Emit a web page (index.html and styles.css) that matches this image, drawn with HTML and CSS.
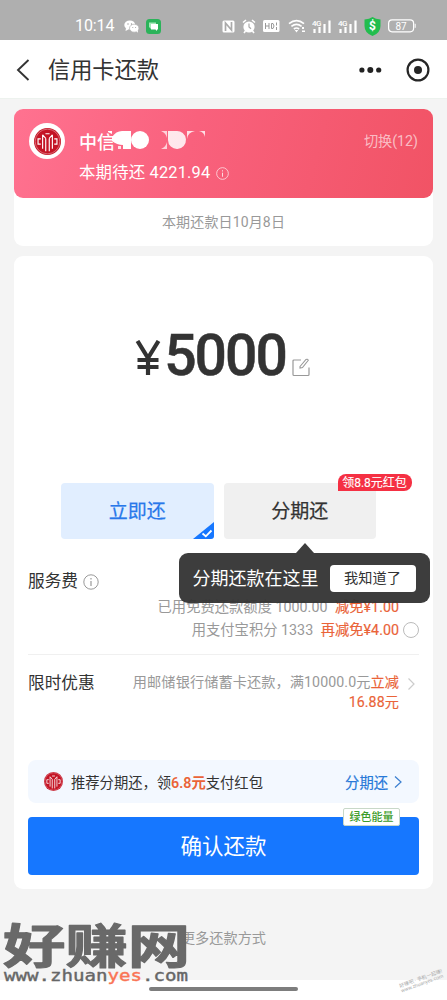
FILE: index.html
```html
<!DOCTYPE html>
<html lang="zh-CN">
<head>
<meta charset="utf-8">
<meta name="viewport" content="width=device-width, initial-scale=1">
<title>信用卡还款</title>
<link rel="stylesheet" href="styles.css">
</head>
<body>
<svg class="defs" aria-hidden="true">
  <symbol id="bank" viewBox="0 0 26 26">
    <circle cx="13" cy="13" r="13" fill="#c41425"/>
    <circle cx="13" cy="13" r="11.900" fill="none" stroke="#fff" stroke-width=".5" opacity=".7"/>
    <g fill="none" stroke="#fff" stroke-width="1.100">
      <path d="M6.500 10.500H3.900v5h2.600M19.500 10.500h2.600v5h-2.600M8.300 6.500V20M17.700 6.500V20M11.300 10v12.500M14.700 10v12.500M8.300 6.500l3 3.500M17.700 6.500l-3 3.500M11 5.500h4"/>
    </g>
  </symbol>
  <symbol id="info" viewBox="0 0 16 16">
    <circle cx="8" cy="8" r="7.200" fill="none" stroke="currentColor"/>
    <path d="M8 7v5M8 4v1.500" stroke="currentColor" stroke-width="1.200"/>
  </symbol>
</svg>
<div class="screen">
  <div class="status">
    <span class="time">10:14</span>
    <svg class="wechat" width="15" height="13" viewBox="0 0 15 13"><ellipse cx="5.800" cy="5" rx="5.500" ry="4.600" fill="#fff"/><path d="M2 8l-.5 3 3-1.500z" fill="#fff"/><ellipse cx="10.200" cy="8.200" rx="4.700" ry="4" fill="#fff" stroke="#afafaf" stroke-width=".7"/><path d="M12 11l2 1.800-.3-3z" fill="#fff"/><g fill="#999"><circle cx="4" cy="4" r=".7"/><circle cx="7.500" cy="4" r=".7"/><circle cx="8.800" cy="7.500" r=".5"/><circle cx="11.600" cy="7.500" r=".5"/></g></svg>
    <svg class="chat" width="15" height="15" viewBox="0 0 15 15"><rect width="15" height="15" rx="3.500" fill="#2bb35a"/><path d="M3 3.500h7v5H5.500L4 10V8.500H3z" fill="#a5e8b8"/><path d="M5 5h7v5.500h-1V12l-1.500-1.500H5z" fill="#fff"/></svg>
    <div class="status-icons">
      <svg width="13" height="13" viewBox="0 0 13 13"><rect x=".5" y=".5" width="12" height="12" rx="1.500" fill="#fff"/><path d="M3.500 11V3l6 7V2" fill="none" stroke="#aaa" stroke-width="1.700"/></svg>
      <svg class="alarm" width="14" height="15" viewBox="0 0 14 15"><circle cx="7" cy="8" r="5.600" fill="#fff"/><path d="M1 3.500L4 1M13 3.500L10 1M3.500 12L2 14M10.500 12l1.500 2" stroke="#fff" stroke-width="1.600"/><path d="M7 4.500V8l2 1.800" fill="none" stroke="#aaa" stroke-width="1.200"/></svg>
      <svg class="hd" width="17" height="12" viewBox="0 0 17 12"><rect width="16.500" height="12" rx="1.500" fill="#fff"/><path d="M2.500 3v6M2.500 6h3.500M6 3v6M8.500 3.500v5h1.500q2-2.500 0-5zM13.500 2.500v3M13.500 7v3" fill="none" stroke="#999"/></svg>
      <svg class="wifi" width="18" height="14" viewBox="0 0 18 14"><g fill="none" stroke="#fff" stroke-width="1.700"><path d="M1 4.600Q8.500-1.500 16 4.600M3.400 7.400q5.100-4 10.200 0M5.900 10q2.600-2 5.200 0"/></g><path d="M6.700 11h3.600l-1.800 2.500zM14 8h2v2h-2zM14 11.500h3v1.500h-3z" fill="#fff"/></svg>
      <svg class="signal" width="20" height="15" viewBox="0 0 20 15"><text x="0" y="7" class="fourg">4G</text><path d="M2.500 10v4M7.500 8v6M12.500 5v9M17.500 1.500v12.500" stroke="#fff" stroke-width="2.200"/></svg>
      <svg class="signal" width="20" height="15" viewBox="0 0 20 15"><text x="0" y="7" class="fourg">4G</text><path d="M2.500 10v4M7.500 8v6M12.500 5v9M17.500 1.500v12.500" stroke="#fff" stroke-width="2.200"/></svg>
      <svg class="shield" width="17" height="19" viewBox="0 0 17 19"><path d="M8.500 0q3 2.300 8 2.600V9q0 7-8 10-8-3-8-10V2.600Q5.500 2.300 8.500 0z" fill="#22bd4e"/><text x="8.500" y="13" text-anchor="middle" class="dollar">$</text></svg>
      <svg class="battery" width="28" height="14" viewBox="0 0 28 14"><rect x=".6" y=".8" width="25" height="12" rx="3.500" fill="none" stroke="#fff" stroke-width="1.200"/><path d="M27.200 4.800v4" stroke="#fff"/><text x="13" y="10.700" text-anchor="middle" class="level">87</text></svg>
    </div>
  </div>
  <header class="nav">
    <svg width="14" height="22" viewBox="0 0 14 22"><path d="M12.500 1L2 11l10.500 10" fill="none" stroke="#333" stroke-width="1.900"/></svg>
    <h1>信用卡还款</h1>
    <svg class="more" width="23" height="8" viewBox="0 0 23 8"><g fill="#222"><circle cx="2.900" cy="4" r="2.600"/><circle cx="11.300" cy="4" r="3"/><circle cx="19.700" cy="4" r="2.600"/></g></svg>
    <svg width="24" height="24" viewBox="0 0 24 24"><circle cx="12" cy="12" r="10.400" fill="none" stroke="#262626" stroke-width="2.200"/><circle cx="12" cy="12" r="4" fill="#262626"/></svg>
  </header>
  <main>
    <section class="card bill">
      <div class="bank-card">
        <div class="logo"><svg width="27" height="27"><use href="#bank"/></svg></div>
        <div class="bank-info">
          <div class="bank-name">中信<svg width="98" height="20" viewBox="0 0 98 20"><g fill="#fff"><path d="M0 1h4v3L0 2zM4 7Q8 1 14 1h9v18h-8v-4q-6 0-11-4z"/><circle cx="32" cy="10" r="9"/><path d="M10 16h3v3h-3z" opacity=".8"/><path d="M53 1h6v7q-1-5-6-7zM53 19q5-2 6-7v7z" opacity=".7"/><path d="M60 1h8a9 9 0 1 1-8 9z" opacity=".85"/><path d="M79 1h8q-7 1-8 8zM91 1h6v6q-1-5-6-6z" opacity=".8"/></g></svg></div>
          <div class="due">本期待还 4221.94 <svg width="13" height="13"><use href="#info"/></svg></div>
        </div>
        <span class="switch">切换(12)</span>
      </div>
      <div class="due-date">本期还款日10月8日</div>
    </section>
    <section class="card pay">
      <div class="amount">
        <svg class="yen" width="26" height="36" viewBox="0 0 26 36"><path d="M2.500 1L13 18 23.500 1M13 17v18M2.500 20h21M2.500 27h21" fill="none" stroke="#333" stroke-width="4.200"/></svg>
        <span class="number">5000</span>
        <svg class="edit" width="18" height="19" viewBox="0 0 18 19"><path d="M9 2H2Q1 2 1 3v13.500q0 1 1 1h14q1 0 1-1V9.500" fill="none" stroke="#999" stroke-width="1.200"/><path d="M8 8.500L14 1.500q1.500-.8 2.300.8L10.500 9.500 8 10z" fill="none" stroke="#999" stroke-width="1.100"/></svg>
      </div>
      <div class="modes">
        <div class="mode on">立即还<svg class="tick" width="21" height="17" viewBox="0 0 21 17"><path d="M21 0v14q0 3-3 3H0z" fill="#1677ff"/><path d="M9.500 11.500l3.300 2.800 5.700-5.800" fill="none" stroke="#fff" stroke-width="1.800"/></svg></div>
        <div class="mode">分期还<span class="coupon">领8.8元红包</span>
          <div class="tip"><span>分期还款在这里</span><b>我知道了</b></div>
        </div>
      </div>
      <div class="fee">
        <div class="label">服务费 <svg width="16" height="16"><use href="#info"/></svg></div>
        <div class="fee-list">
          <p>已用免费还款额度 1000.00 <em>减免¥1.00</em></p>
          <p>用支付宝积分 1333 <em>再减免¥4.00</em><i class="radio"></i></p>
        </div>
      </div>
      <div class="offer">
        <div class="label">限时优惠</div>
        <p>用邮储银行储蓄卡还款，满10000.0元<em>立减<br>16.88元</em></p>
        <svg width="9" height="14" viewBox="0 0 9 14"><path d="M1.500 1.500L7 7l-5.500 5.500" fill="none" stroke="#ccc" stroke-width="1.200"/></svg>
      </div>
      <div class="promo">
        <svg width="19" height="19"><use href="#bank"/></svg>
        <span>推荐分期还，领<em>6.8元</em>支付红包</span>
        <a>分期还<svg width="8" height="14" viewBox="0 0 8 14"><path d="M1 1.500L7 7l-6 5.500" fill="none" stroke="#3b7fd0" stroke-width="1.200"/></svg></a>
      </div>
      <div class="confirm">确认还款<span class="energy">绿色能量</span></div>
    </section>
    <div class="other">更多还款方式</div>
  </main>
  <footer><i class="home"></i></footer>
  <div class="brand">
    <svg width="192" height="66" viewBox="0 0 192 66">
      <text transform="translate(2 41.500) scale(1.200 .9)" x="0" y="0" class="brand-name">好赚网</text>
      <text x="3" y="60" class="brand-url" textLength="184" lengthAdjust="spacingAndGlyphs">www.zhuan<tspan class="hot">yes</tspan>.com</text>
    </svg>
  </div>
  <div class="stamp">好赚吧 · 手机一起赚!<br>www.zhuanyes.com</div>
</div>
</body>
</html>
```
FILE: styles.css
```css
* { box-sizing: border-box; }
body { margin: 0; font-family: Roboto, "Noto Sans CJK SC", sans-serif; color: #333; background: #f4f4f4; }
svg { display: block; flex: none; }
.defs { position: absolute; width: 0; height: 0; }
em, i { font-style: normal; }
p, h1 { margin: 0; font-weight: 400; }
.screen { position: relative; height: 1000px; overflow: hidden; display: flex; flex-direction: column; }

.status { height: 40px; flex: none; background: #afafaf; display: flex; align-items: center; padding: 12px 31px 0 75px; color: #fff; }
.time { font-size: 16px; line-height: 20px; width: 49px; letter-spacing: -.1px; }
.chat { margin-left: 7px; }
.status-icons { display: flex; align-items: center; margin-left: auto; }
.alarm { margin-left: 7px; }
.hd { margin-left: 7px; }
.wifi { margin-left: 8px; }
.signal { margin-left: 6px; }
.shield { margin-left: 6px; }
.battery { margin-left: 7px; }
.fourg { font-size: 8px; font-weight: 500; fill: #fff; letter-spacing: -.5px; }
.dollar { font-size: 12px; font-weight: 700; fill: #fff; }
.level { font-size: 10px; fill: #fff; }

.nav { height: 59px; flex: none; background: #fff; border-bottom: 1px solid #edf2ee; display: flex; align-items: center; padding: 1px 17px 0 16px; }
.nav h1 { font-size: 22.200px; line-height: 30px; margin-left: 18px; padding-top: 1px; }
.more { margin-left: auto; margin-right: 24px; }

main { flex: 1; padding: 10px 14px 0; }
.card { background: #fff; border-radius: 9px; }
.bill { height: 137px; }
.bank-card { height: 89px; border-radius: 9px; background: linear-gradient(105deg, #ff7290 0%, #f9617d 42%, #f15365 100%); display: flex; padding: 14px 15px 0; color: #fff; }
.logo { width: 36px; height: 36px; border-radius: 50%; background: #fff; display: grid; place-items: center; }
.bank-info { margin-left: 14px; padding-top: 7px; }
.bank-name { font-size: 18px; line-height: 26px; font-weight: 500; display: flex; align-items: center; }
.bank-name svg { margin: -6px 0 0 -7px; overflow: visible; }
.due { font-size: 16.400px; line-height: 24px; margin-top: 5px; display: flex; align-items: center; letter-spacing: .18px; white-space: pre; }
.due svg { opacity: .8; margin-left: 1px; margin-top: 1px; }
.switch { margin-left: auto; padding-top: 8px; font-size: 14.200px; line-height: 20px; color: rgba(255,255,255,.62); }
.due-date { height: 48px; line-height: 49px; text-align: center; font-size: 14px; color: #999; letter-spacing: .15px; }

.pay { margin-top: 10px; height: 633px; padding: 0 14px; }
.amount { height: 227px; display: flex; justify-content: center; align-items: flex-end; padding-bottom: 106px; }
.yen { margin: 0 0 1px -2px; }
.number { font-size: 57px; line-height: 44px; height: 43px; font-weight: 500; -webkit-text-stroke: .5px; letter-spacing: -2px; margin-left: 3px; }
.edit { margin-left: 6px; margin-bottom: 0; }
.modes { display: flex; gap: 10px; padding-left: 33px; }
.mode { position: relative; width: 152.500px; height: 56px; border-radius: 4px; background: #f0f0f0; text-align: center; font-size: 19px; line-height: 57px; font-weight: 400; -webkit-text-stroke: .25px; }
.mode.on { background: #e1eeff; color: #2878ea; }
.tick { position: absolute; right: 0; bottom: 0; }
.coupon { position: absolute; left: 114px; top: -9px; width: 74px; height: 17px; border-radius: 8px 8px 8px 0; background: #f53043; color: #fff; font-size: 12px; line-height: 18px; font-weight: 400; -webkit-text-stroke: .1px; white-space: nowrap; }
.tip { position: absolute; z-index: 2; left: -45px; top: 70px; width: 251px; height: 50px; border-radius: 9px; background: rgba(51,51,51,.95); display: flex; align-items: center; padding: 0 14px; color: #fff; -webkit-text-stroke: 0; }
.tip::before { content: ""; position: absolute; left: 117px; top: -10px; border: 9px solid transparent; border-top: 0; border-bottom: 10px solid #3d3d3d; }
.tip span { font-size: 18px; line-height: 24px; padding-top: 2px; white-space: nowrap; }
.tip b { margin-left: auto; width: 86px; height: 27px; border-radius: 4px; background: #fff; color: #333; font-size: 14.200px; line-height: 27px; font-weight: 400; }

.fee { height: 116px; border-bottom: 1px solid #f0f0f0; display: flex; justify-content: space-between; align-items: flex-start; padding-top: 30px; }
.label { font-size: 16.700px; line-height: 24px; display: flex; align-items: center; gap: 5px; white-space: nowrap; padding-top: 1px; }
.label svg { color: #999; }
.fee-list { padding-top: 27px; text-align: right; font-size: 14.300px; line-height: 23px; color: #999; }
.fee-list p { padding-right: 20px; position: relative; white-space: nowrap; }
.fee-list em { margin-left: 4px; }
em { color: #ea6338; }
.fee-list em, .offer em { -webkit-text-stroke: .15px; }
.radio { position: absolute; right: 0; top: 3px; width: 16px; height: 16px; border: 1px solid #bbb; border-radius: 50%; }
.offer { height: 105px; display: flex; align-items: flex-start; padding: 16px 3px 0 0; }
.offer p { margin-left: auto; text-align: right; font-size: 14.200px; line-height: 20px; padding-top: 1px; color: #999; letter-spacing: .08px; }
.offer svg { margin: 6px 0 0 8px; }
.promo { height: 43px; border-radius: 8px; background: #f3f8ff; display: flex; align-items: center; padding: 0 17px 0 16px; font-size: 14.300px; }
.promo span { margin-left: 8px; }
.promo em { font-weight: 600; }
.promo a { margin-left: auto; display: flex; align-items: center; gap: 6px; color: #2879d8; -webkit-text-stroke: .2px; }
.confirm { position: relative; margin-top: 14px; height: 58px; border-radius: 4px; background: #1677ff; color: #fff; text-align: center; font-size: 21.500px; line-height: 59px; }
.energy { position: absolute; right: 19px; top: -9px; width: 57px; height: 18px; border: 1px solid #c8d8c8; border-radius: 2px; background: #fff; color: #3b9b28; font-size: 11px; line-height: 17px; font-weight: 500; }
.other { margin-top: 38px; text-align: center; font-size: 14.200px; line-height: 22px; color: #999; }
footer { height: 20px; flex: none; background: #fff; display: flex; justify-content: center; padding-top: 7px; }
.home { width: 149px; height: 4px; border-radius: 2px; background: #7d7d7d; }
.brand { position: absolute; left: 1px; top: 921px; }
.brand-name { font: 700 52px "Noto Sans CJK SC", sans-serif; fill: #696969; stroke: #696969; stroke-width: 1.200px; stroke-linejoin: round; }
.brand-url { font: 16px "DejaVu Sans Mono", monospace; fill: #666; stroke: #666; stroke-width: .4px; }
.hot { fill: #fa7454; stroke: #fa7454; }
.stamp { position: absolute; left: 399px; top: 976px; font-size: 5px; line-height: 5px; color: #aaa; white-space: nowrap; transform: rotate(-20deg); }
```
